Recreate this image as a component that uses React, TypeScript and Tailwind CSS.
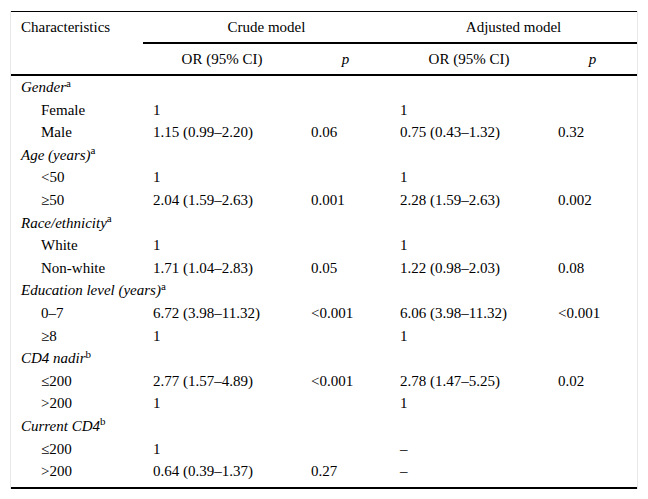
import React from "react";

type Row = {
  label: string;
  sup?: string;
  group?: boolean;
  or1?: string;
  p1?: string;
  or2?: string;
  p2?: string;
};

const rows: Row[] = [
  { label: "Gender", sup: "a", group: true },
  { label: "Female", or1: "1", or2: "1" },
  { label: "Male", or1: "1.15 (0.99–2.20)", p1: "0.06", or2: "0.75 (0.43–1.32)", p2: "0.32" },
  { label: "Age (years)", sup: "a", group: true },
  { label: "<50", or1: "1", or2: "1" },
  { label: "≥50", or1: "2.04 (1.59–2.63)", p1: "0.001", or2: "2.28 (1.59–2.63)", p2: "0.002" },
  { label: "Race/ethnicity", sup: "a", group: true },
  { label: "White", or1: "1", or2: "1" },
  { label: "Non-white", or1: "1.71 (1.04–2.83)", p1: "0.05", or2: "1.22 (0.98–2.03)", p2: "0.08" },
  { label: "Education level (years)", sup: "a", group: true },
  { label: "0–7", or1: "6.72 (3.98–11.32)", p1: "<0.001", or2: "6.06 (3.98–11.32)", p2: "<0.001" },
  { label: "≥8", or1: "1", or2: "1" },
  { label: "CD4 nadir", sup: "b", group: true },
  { label: "≤200", or1: "2.77 (1.57–4.89)", p1: "<0.001", or2: "2.78 (1.47–5.25)", p2: "0.02" },
  { label: ">200", or1: "1", or2: "1" },
  { label: "Current CD4", sup: "b", group: true },
  { label: "≤200", or1: "1", or2: "–" },
  { label: ">200", or1: "0.64 (0.39–1.37)", p1: "0.27", or2: "–" },
];

const cols = "grid grid-cols-[132px_158px_89px_158px_89px]";

export default function App() {
  return (
    <div className="min-h-screen bg-white pt-[11px] pl-[10px] font-serif text-[15px] text-black">
      <div className="w-[628px] border-x border-[#e8e8e8] font-[Liberation_Serif,serif]">
        <div className="border-t border-black">
          {/* header */}
          <div className={`${cols} border-b-2 border-black`}>
            <div className="row-span-2 flex h-[30px] items-center pl-[10px]">Characteristics</div>
            <div className="col-span-2 flex h-[32px] items-center justify-center border-b-2 border-black">
              Crude model
            </div>
            <div className="col-span-2 flex h-[32px] items-center justify-center border-b-2 border-black">
              Adjusted model
            </div>
            <div className="flex h-[30px] items-center justify-center">OR (95% CI)</div>
            <div className="flex h-[30px] items-center justify-center italic">p</div>
            <div className="flex h-[30px] items-center justify-center">OR (95% CI)</div>
            <div className="flex h-[30px] items-center justify-center italic">p</div>
          </div>

          {/* body */}
          <div className="border-b-2 border-black pb-[4px]">
            {rows.map((r, i) => (
              <div key={i} className={`${cols} h-[22.6px] items-center whitespace-nowrap`}>
                {r.group ? (
                  <div className="col-span-5 pl-[10px] italic">
                    {r.label}
                    {r.sup && <sup className="text-[11px] not-italic">{r.sup}</sup>}
                  </div>
                ) : (
                  <>
                    <div className="pl-[30px]">{r.label}</div>
                    <div className="pl-[10px]">{r.or1}</div>
                    <div className="pl-[10px]">{r.p1}</div>
                    <div className="pl-[10px]">{r.or2}</div>
                    <div className="pl-[10px]">{r.p2}</div>
                  </>
                )}
              </div>
            ))}
          </div>
        </div>
      </div>
    </div>
  );
}
